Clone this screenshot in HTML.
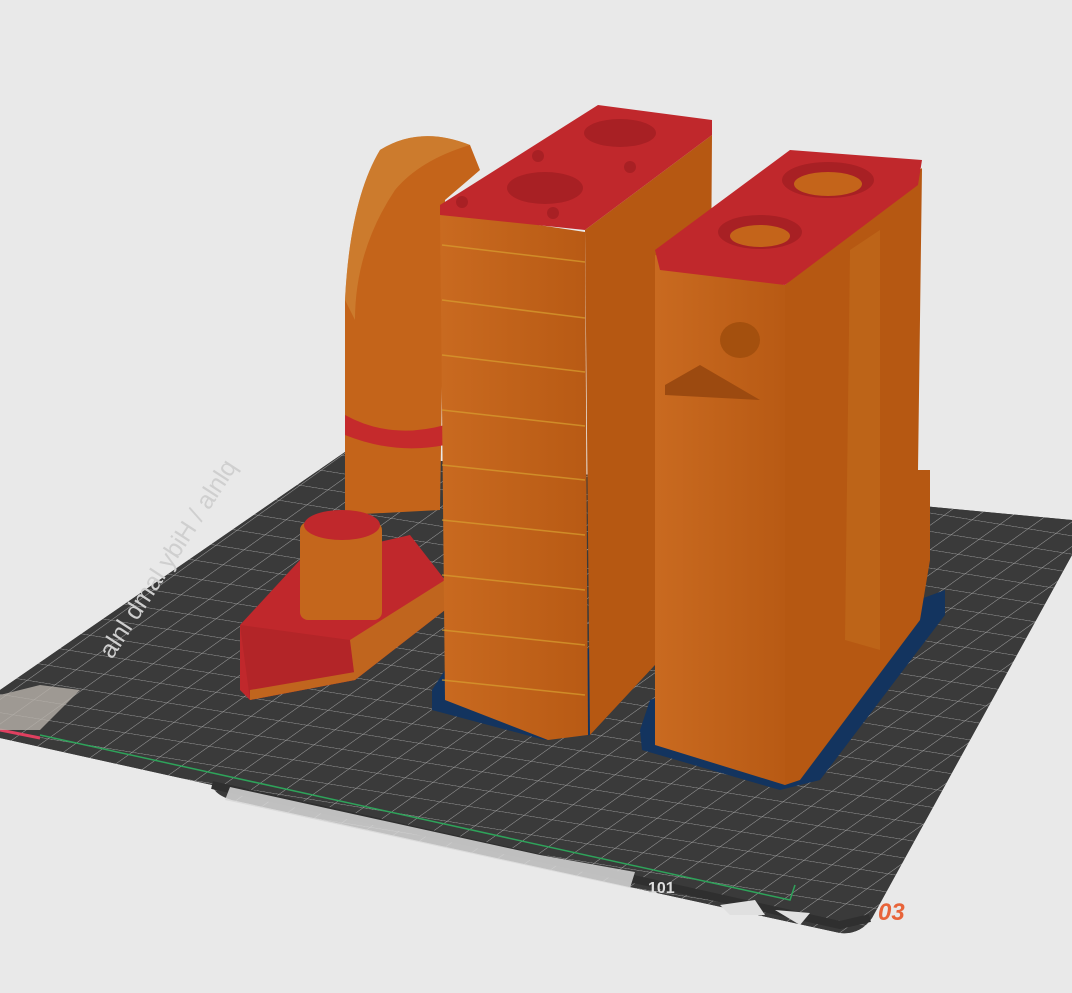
<!DOCTYPE html>
<html><head><meta charset="utf-8"><style>
html,body{margin:0;padding:0;background:#e9e9e9;width:1072px;height:993px;overflow:hidden}
svg{display:block}
</style></head><body>
<svg width="1072" height="993" viewBox="0 0 1072 993" xmlns="http://www.w3.org/2000/svg">
<defs>
<pattern id="g" width="1" height="1" patternUnits="userSpaceOnUse" patternTransform="matrix(28 4.5 -21 15 342 455)">
<rect width="1" height="1" fill="#3a3a3a"/>
<path d="M0 0H1M0 0V1" stroke="#a0a0a0" stroke-width="0.05" fill="none"/>
</pattern>
<clipPath id="pc"><path d="M345 452 L1072 520 L1072 555 L872 918 Q860 935 840 933 L232 800 Q215 795 212 785 L0 738 L0 690 Z"/></clipPath>
<linearGradient id="or" x1="0" x2="1"><stop offset="0" stop-color="#c96a20"/><stop offset="1" stop-color="#b85a14"/></linearGradient>
</defs>
<path d="M345 452 L1072 520 L1072 555 L872 918 Q860 935 840 933 L232 800 Q215 795 212 785 L0 738 L0 690 Z" fill="#3a3a3a"/>
<rect width="1072" height="993" fill="url(#g)" clip-path="url(#pc)"/>
<path d="M212 785 L840 925 L870 918" stroke="#2f2f2f" stroke-width="8" fill="none"/>
<path d="M40 735 L790 900 L795 885" stroke="#2ea35a" stroke-width="1.5" fill="none"/>
<path d="M0 730 L40 738" stroke="#e04060" stroke-width="3"/>
<path d="M0 695 L0 730 L40 730 L80 690 L40 685 Z" fill="#b8b2aa" opacity="0.8"/>
<path d="M230 787 L540 855 L635 872 L630 888 L225 800 Z" fill="#d8d8d8" opacity="0.85"/>
<path d="M720 905 L755 900 L765 915 L730 915 Z M775 910 L810 913 L800 925 Z" fill="#e0e0e0"/>
<text x="648" y="893" font-family="Liberation Sans,sans-serif" font-size="16" font-weight="bold" fill="#ddd">101</text>
<text x="878" y="920" font-family="Liberation Sans,sans-serif" font-size="24" font-weight="bold" font-style="italic" fill="#e8643a">03</text>
<text transform="translate(112 660) rotate(-57)" font-family="Liberation Sans,sans-serif" font-size="25" fill="#cfcfcf">alnl dmal ybiH / alnlq</text>
<path d="M432 690 L445 670 L650 640 L655 665 L590 735 L545 740 L432 710 Z" fill="#13345f"/>
<path d="M640 730 L650 700 L945 590 L945 615 L820 780 L780 790 L642 750 Z" fill="#13345f"/>
<path d="M380 150 Q420 125 470 145 L480 170 L445 200 L440 510 L345 515 L345 300 Q350 200 380 150 Z" fill="#c4641a"/>
<path d="M380 150 Q420 125 470 145 Q420 160 395 190 Q355 250 355 320 L345 300 Q350 200 380 150 Z" fill="#d28a3a" opacity="0.6"/>
<path d="M345 415 Q390 440 445 425 L445 445 Q395 455 345 435 Z" fill="#c52a2c"/>
<path d="M240 625 L300 560 L410 535 L445 580 L445 610 L355 680 L250 700 L240 690 Z" fill="#c0282c"/>
<path d="M240 625 L250 700 L355 680 L350 640 Z" fill="#b32528"/>
<path d="M350 640 L445 580 L445 610 L355 680 Z" fill="#c0651e"/>
<path d="M250 700 L355 680 L355 672 L250 690 Z" fill="#c0651e"/>
<rect x="300" y="522" width="82" height="98" rx="8" fill="#c4661c"/>
<ellipse cx="342" cy="525" rx="38" ry="15" fill="#c0282c"/>
<path d="M585 230 L712 135 L710 420 L655 500 L655 665 L590 735 Z" fill="#b65812"/>
<path d="M440 210 L585 232 L588 735 L548 740 L445 700 Z" fill="url(#or)"/>
<g stroke="#d9a030" stroke-width="1.5" opacity="0.7">
<path d="M442 245 L585 262 M442 300 L585 318 M442 355 L585 372 M442 410 L585 426 M442 465 L585 480 M442 520 L585 535 M442 575 L585 590 M442 630 L585 645 M442 680 L585 695"/>
</g>
<path d="M440 205 L598 105 L712 120 L712 135 L585 230 L440 215 Z" fill="#c0282c"/>
<ellipse cx="545" cy="188" rx="38" ry="16" fill="#a82024"/>
<ellipse cx="620" cy="133" rx="36" ry="14" fill="#a82024"/>
<circle cx="462" cy="202" r="6" fill="#a82024"/><circle cx="553" cy="213" r="6" fill="#a82024"/>
<circle cx="538" cy="156" r="6" fill="#a82024"/><circle cx="630" cy="167" r="6" fill="#a82024"/>
<path d="M785 285 L922 168 L918 470 L930 470 L930 560 L920 620 L800 780 L785 785 Z" fill="#b65812"/>
<path d="M655 255 L785 285 L785 785 L655 745 Z" fill="url(#or)"/>
<path d="M665 385 L700 365 L760 400 L665 395 Z" fill="#9c4a10"/>
<ellipse cx="740" cy="340" rx="20" ry="18" fill="#a4500e"/>
<path d="M655 250 L790 150 L922 160 L918 185 L785 285 L660 270 Z" fill="#c0282c"/>
<ellipse cx="828" cy="180" rx="46" ry="18" fill="#a82024"/>
<ellipse cx="760" cy="232" rx="42" ry="17" fill="#a82024"/>
<ellipse cx="760" cy="236" rx="30" ry="11" fill="#c4641a"/>
<ellipse cx="828" cy="184" rx="34" ry="12" fill="#c4641a"/>
<path d="M850 250 L880 230 L880 650 L845 640 Z" fill="#c4701e" opacity="0.5"/>
</svg>
</body></html>
